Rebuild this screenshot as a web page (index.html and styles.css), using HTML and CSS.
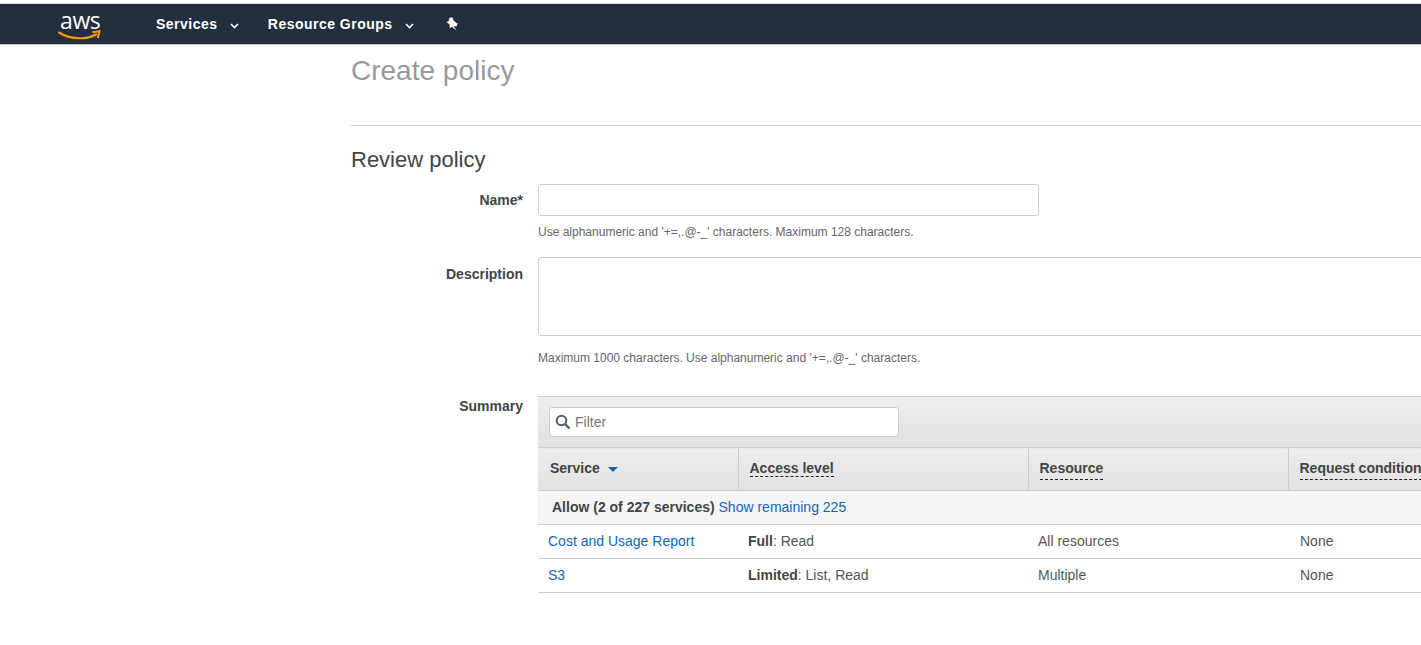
FILE: index.html
```html
<!DOCTYPE html>
<html lang="en">
<head>
<meta charset="utf-8">
<title>Create policy</title>
<link rel="stylesheet" href="styles.css">
</head>
<body>
<header class="navbar">
  <a class="logo">
    <span class="logo-text">aws</span>
    <svg class="logo-smile" width="43" height="11" viewBox="0 0 43 11"><path d="M1 2.5C12 9.5 28 10 38 4.5" fill="none" stroke="#f90" stroke-width="2.2" stroke-linecap="round"/><path d="M34.5 2.2L41.5 1.2L39.8 8" fill="none" stroke="#f90" stroke-width="2"/></svg>
  </a>
  <nav class="nav-items">
    <a class="nav-item">Services <svg class="chev" width="9" height="6" viewBox="0 0 9 6"><path d="M1 1l3.5 3.5L8 1" fill="none" stroke="#fff" stroke-width="1.6"/></svg></a>
    <a class="nav-item">Resource Groups <svg class="chev" width="9" height="6" viewBox="0 0 9 6"><path d="M1 1l3.5 3.5L8 1" fill="none" stroke="#fff" stroke-width="1.6"/></svg></a>
    <svg class="pin" width="14" height="14" viewBox="0 0 14 14"><path d="M4.5 0.8L8 0.5L7.8 2.5L11.5 6.2L12.8 6.2L11.5 9.5L8.5 9L11.5 13.5L6.8 9.8L4.8 11.2L4.5 7.5L1.5 5L3.5 4.2Z" fill="#fff"/></svg>
  </nav>
</header>
<main class="page">
  <h1 class="title">Create policy</h1>
  <hr class="rule">
  <h2 class="section">Review policy</h2>
  <div class="form">
    <div class="field field-name">
      <label class="label">Name*</label>
      <div class="control">
        <input class="input" type="text">
        <p class="help">Use alphanumeric and '+=,.@-_' characters. Maximum 128 characters.</p>
      </div>
    </div>
    <div class="field field-desc">
      <label class="label label-desc">Description</label>
      <div class="control">
        <textarea class="textarea"></textarea>
        <p class="help">Maximum 1000 characters. Use alphanumeric and '+=,.@-_' characters.</p>
      </div>
    </div>
    <div class="field">
      <label class="label label-summary">Summary</label>
      <div class="control summary">
        <div class="toolbar">
          <div class="filter">
            <svg class="search" width="16" height="16" viewBox="0 0 16 16"><circle cx="6.5" cy="6.5" r="4.8" fill="none" stroke="#545b64" stroke-width="2"/><path d="M10 10l4.5 4.5" stroke="#545b64" stroke-width="2.4"/></svg>
            <span class="filter-text">Filter</span>
          </div>
        </div>
        <table class="table">
          <colgroup><col class="c1"><col class="c2"><col class="c3"><col class="c4"></colgroup>
          <thead>
            <tr>
              <th><span class="th-plain">Service</span><span class="caret"></span></th>
              <th><span class="th-dash th-near">Access level</span></th>
              <th><span class="th-dash">Resource</span></th>
              <th><span class="th-dash">Request condition</span></th>
            </tr>
          </thead>
          <tbody>
            <tr class="group"><td colspan="4"><b>Allow (2 of 227 services)</b> <a class="link">Show remaining 225</a></td></tr>
            <tr><td><a class="link">Cost and Usage Report</a></td><td><b>Full</b>: Read</td><td>All resources</td><td>None</td></tr>
            <tr><td><a class="link">S3</a></td><td><b>Limited</b>: List, Read</td><td>Multiple</td><td>None</td></tr>
          </tbody>
        </table>
      </div>
    </div>
  </div>
</main>
</body>
</html>
```
FILE: styles.css
```css
html, body { margin: 0; height: 100%; overflow: hidden; background: #fff; }
body { font-family: "Liberation Sans", Arial, sans-serif; font-size: 14px; color: #444; width: 1421px; }
.navbar { margin-top: 3px; height: 40px; background: #232f3e; border-top: 1px solid #d5d9dc; border-bottom: 1px solid #c8ccd0; display: flex; align-items: center; color: #fff; }
.logo { position: relative; width: 44px; height: 32px; margin-left: 58px; flex: none; }
.logo-text { position: absolute; left: 2px; top: -3px; font-family: "Open Sans", "Liberation Sans", sans-serif; font-size: 23px; line-height: 30px; color: #fff; letter-spacing: -0.4px; }
.logo-smile { position: absolute; left: 0; top: 22px; }
.nav-items { display: flex; align-items: center; margin-left: 54px; }
.nav-item { font-weight: 700; font-size: 14px; letter-spacing: 0.48px; color: #fff; margin-right: 29px; display: flex; align-items: center; white-space: pre; }
.chev { margin-left: 8px; margin-top: 3px; }
.pin { margin-left: 2px; }
.page { padding-left: 351px; }
.title { margin: 0; padding-top: 9px; font-size: 28px; font-weight: 400; line-height: 34px; color: #999; }
.rule { margin: 37px 0 0; border: 0; border-top: 1px solid #ccc; }
.section { margin: 21px 0 0; font-size: 22px; font-weight: 400; line-height: 26px; color: #444; }
.form { margin-top: 11px; }
.field { display: flex; }
.field-name { height: 73px; }
.field-desc { height: 139px; }
.label { width: 172px; flex: none; text-align: right; font-weight: 700; font-size: 14px; line-height: 18px; padding-top: 7px; color: #444; box-sizing: border-box; }
.label-desc { padding-top: 8px; }
.label-summary { padding-top: 1px; }
.control { margin-left: 15px; flex: none; width: 1000px; }
.input { display: block; box-sizing: border-box; width: 501px; height: 32px; border: 1px solid #ccc; border-radius: 3px; background: #fff; margin: 0; padding: 0; }
.textarea { display: block; box-sizing: border-box; width: 1000px; height: 79px; border: 1px solid #ccc; border-radius: 3px; background: #fff; margin: 0; padding: 0; resize: none; }
.help { margin: 9px 0 0; font-size: 12px; line-height: 14px; color: #666; }
.field-desc .help { margin-top: 15px; }
.toolbar { box-sizing: border-box; height: 51px; background: linear-gradient(#eee, #e1e1e1); border-top: 1px solid #ccc; padding: 10px 0 0 11px; }
.filter { box-sizing: border-box; width: 350px; height: 30px; background: #fff; border: 1px solid #ccc; border-radius: 3px; display: flex; align-items: center; padding-left: 5px; }
.search { flex: none; }
.filter-text { margin-left: 4px; font-size: 14px; color: #777; }
.table { border-collapse: collapse; table-layout: fixed; width: 1000px; font-size: 14px; }
.c1 { width: 200px; }
.c2 { width: 290px; }
.c3 { width: 260px; }
.c4 { width: 250px; }
th { height: 43px; box-sizing: border-box; padding: 12px 0 0 11px; vertical-align: top; line-height: 16px; text-align: left; font-weight: 700; color: #444; background: linear-gradient(#ededed, #e1e1e1); border-top: 1px solid #ccc; border-bottom: 1px solid #ccc; border-right: 1px solid #ccc; white-space: nowrap; overflow: hidden; }
th:first-child { padding-left: 12px; }
.th-dash { padding-bottom: 3px; border-bottom: 1px dashed #222; }
.th-near { padding-bottom: 0; }
.caret { display: inline-block; width: 0; height: 0; margin-left: 8px; border-left: 5px solid transparent; border-right: 5px solid transparent; border-top: 5px solid #1166bb; vertical-align: middle; }
td { height: 34px; box-sizing: border-box; padding: 0 0 2px 10px; border-bottom: 1px solid #ccc; color: #555; white-space: nowrap; }
td:last-child { padding-left: 12px; }
td b { color: #444; }
.group td { background: #f5f5f5; padding-left: 14px; color: #444; }
.link { color: #1166bb; }
```
